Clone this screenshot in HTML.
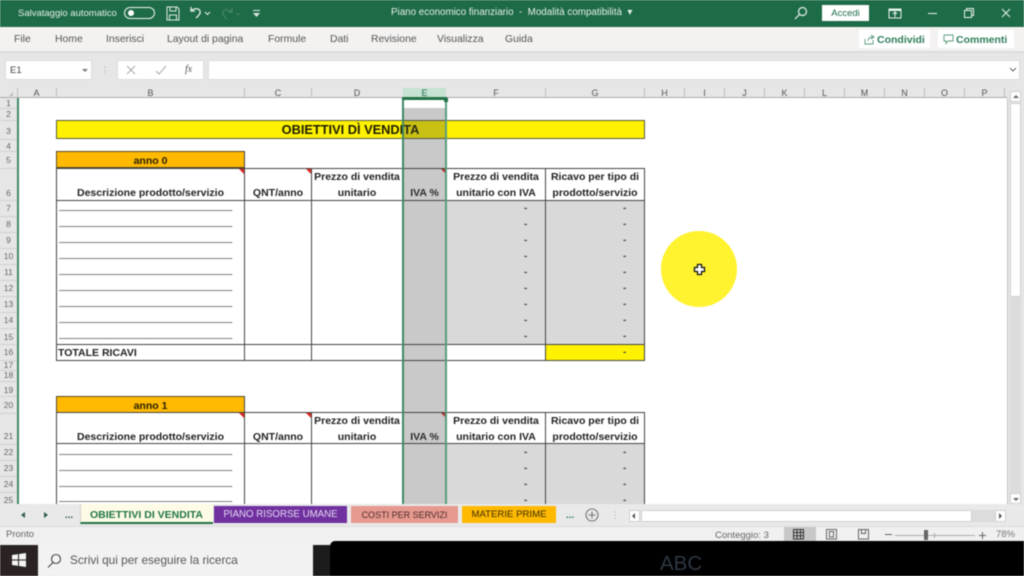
<!DOCTYPE html>
<html lang="it"><head><meta charset="utf-8"><title>Piano economico finanziario</title>
<style>
html,body{margin:0;padding:0;width:1024px;height:576px;overflow:hidden;background:#e6e6e6}
*{box-sizing:border-box}
#w{position:relative;width:1024px;height:576px;overflow:hidden;font-family:"Liberation Sans",sans-serif;filter:blur(.5px);color:#444}
#w div,#w span.a,#w svg{position:absolute}
.t{white-space:nowrap;line-height:14px}
.c{white-space:nowrap;text-align:center;line-height:14px}
.tb{color:#e4efe9;font-size:9.5px}
.rb{top:33px;font-size:10.4px;color:#555}
.ch{top:87px;font-size:9px;color:#555;text-align:center;line-height:12px}
.vs{top:88px;width:1px;height:10px;background:#bdbdbd}
.rh{left:0;width:17px;font-size:8.5px;color:#666;text-align:center;line-height:10px}
.rs{left:0;width:17px;height:1px;background:#cfcfcf}
.h{font-weight:bold;font-size:10.5px;color:#222;text-align:center;line-height:16px;white-space:nowrap;margin-top:1px}
.v{width:1px;background:#444}
.hl{height:1px;background:#444}
.dots{left:59px;width:173px;overflow:hidden;font-size:6px;line-height:8px;font-weight:bold;color:#000;white-space:nowrap}
.m{font-size:10px;color:#444;line-height:12px;margin-top:1px;font-weight:bold}
.tri{width:0;height:0;border-top:5px solid #e0261e;border-left:5px solid transparent}
</style></head><body><div id="w">

<!-- title bar -->
<div style="left:0;top:0;width:1024px;height:27px;background:#1e6b47"></div>
<div class="t tb" style="left:18px;top:7px">Salvataggio automatico</div>
<div style="left:124px;top:7px;width:31px;height:12px;border:1px solid #f0f5f2;border-radius:6px"></div>
<div style="left:128px;top:10px;width:6px;height:6px;border-radius:50%;background:#fff"></div>
<svg style="left:166px;top:6px" width="14" height="15" viewBox="0 0 14 15" fill="none" stroke="#dfeae4" stroke-width="1"><path d="M1 1h10l2 2v11H1z"/><path d="M4 1v4h6V1M3.500 14V9h7v5"/></svg>
<svg style="left:189px;top:6px" width="22" height="14" viewBox="0 0 22 14" fill="none" stroke="#e6f0ea" stroke-width="1.300"><path d="M2 1v4h4M2 5c3-3 8-3 9 0 .8 3-2 5-4 7"/><path d="M16 6l2.500 2.500L21 6" stroke-width="1"/></svg>
<svg style="left:220px;top:7px" width="22" height="13" viewBox="0 0 22 13" fill="none" stroke="#4d8a6d" stroke-width="1.100"><path d="M12 1v4H8M12 5C9 2 4 2 3 5c-.8 3 2 5 4 7"/><path d="M16 6l2 2 2-2" stroke-width=".8"/></svg>
<svg style="left:252px;top:9px" width="9" height="9" viewBox="0 0 9 9" fill="#dfeae4"><rect x="1" y="1" width="7" height="1"/><path d="M1 4h7L4.500 8z"/></svg>
<div class="t tb" style="left:391px;top:6px;font-size:9.8px">Piano economico finanziario &nbsp;-&nbsp; Modalità compatibilità &nbsp;▾</div>
<svg style="left:794px;top:6px" width="14" height="14" viewBox="0 0 14 14" fill="none" stroke="#e8f1ec" stroke-width="1.200"><circle cx="8.500" cy="5.500" r="4"/><path d="M5.500 8.500L1 13"/></svg>
<div class="c" style="left:822px;top:5px;width:47px;height:16px;background:#fff;color:#1e6b47;font-size:9.500px;line-height:17px">Accedi</div>
<svg style="left:888px;top:8px" width="14" height="11" viewBox="0 0 14 11" fill="none" stroke="#e8f1ec"><rect x="1" y="1" width="12" height="9"/><path d="M1 2h12" stroke-width="2"/><path d="M7 9V4.500M5 6l2-2 2 2"/></svg>
<div style="left:928px;top:13px;width:9px;height:1px;background:#e8f1ec"></div>
<svg style="left:964px;top:8px" width="10" height="10" viewBox="0 0 10 10" fill="none" stroke="#e8f1ec"><rect x=".5" y="2.500" width="7" height="7"/><path d="M2.500 2.500v-2h7v7h-2"/></svg>
<svg style="left:1001px;top:8px" width="10" height="10" viewBox="0 0 10 10" fill="none" stroke="#e8f1ec"><path d="M1 1l8 8M9 1l-8 8"/></svg>

<!-- ribbon tabs -->
<div style="left:0;top:27px;width:1024px;height:24px;background:#f3f2f1"></div>
<div style="left:0;top:51px;width:1024px;height:2px;background:#dcdcdc"></div>
<div class="t rb" style="left:14px">File</div>
<div class="t rb" style="left:55px">Home</div>
<div class="t rb" style="left:106px">Inserisci</div>
<div class="t rb" style="left:167px">Layout di pagina</div>
<div class="t rb" style="left:268px">Formule</div>
<div class="t rb" style="left:330px">Dati</div>
<div class="t rb" style="left:371px">Revisione</div>
<div class="t rb" style="left:437px">Visualizza</div>
<div class="t rb" style="left:505px">Guida</div>
<div style="left:859px;top:30px;width:71px;height:18px;background:#fff"></div>
<svg style="left:864px;top:34px" width="11" height="11" viewBox="0 0 11 11" fill="none" stroke="#5a9a7c" stroke-width=".9"><path d="M1 5v5h8V6M4 7c0-3 2-4 5-4M7 1l3 2-3 2"/></svg>
<div class="t" style="left:877px;top:33px;font-size:10.500px;font-weight:bold;color:#2f7d5a">Condividi</div>
<div style="left:938px;top:30px;width:76px;height:18px;background:#fff"></div>
<svg style="left:943px;top:34px" width="11" height="11" viewBox="0 0 11 11" fill="none" stroke="#5a9a7c" stroke-width=".9"><path d="M1 1h9v6H5L3 9.500V7H1z"/></svg>
<div class="t" style="left:956px;top:33px;font-size:10.500px;font-weight:bold;color:#2f7d5a">Commenti</div>

<!-- formula bar -->
<div style="left:5px;top:60px;width:87px;height:20px;background:#fff;border:1px solid #dcdcdc"></div>
<div class="t" style="left:10px;top:64px;font-size:9.500px;color:#444">E1</div>
<div style="left:82px;top:69px;border-top:3px solid #777;border-left:3px solid transparent;border-right:3px solid transparent"></div>
<div class="c" style="left:100px;top:63px;width:10px;color:#aaa;font-size:9px">⋮</div>
<div style="left:117px;top:60px;width:87px;height:20px;background:#fff;border:1px solid #dcdcdc"></div>
<svg style="left:126px;top:65px" width="10" height="10" viewBox="0 0 10 10" fill="none" stroke="#aaa"><path d="M1 1l8 8M9 1l-8 8"/></svg>
<svg style="left:155px;top:65px" width="12" height="10" viewBox="0 0 12 10" fill="none" stroke="#aaa"><path d="M1 6l3 3 7-8"/></svg>
<div class="t" style="left:185px;top:63px;font-family:'Liberation Serif',serif;font-style:italic;font-size:10px;color:#555"><i>fx</i></div>
<div style="left:208px;top:60px;width:812px;height:20px;background:#fff;border:1px solid #dcdcdc"></div>
<svg style="left:1009px;top:67px" width="8" height="6" viewBox="0 0 8 6" fill="none" stroke="#666"><path d="M1 1l3 3 3-3"/></svg>

<!-- column headers -->
<div style="left:403px;top:88px;width:43px;height:10px;background:#c6e2d2"></div>
<div style="left:0;top:97px;width:1007px;height:1px;background:#ababab"></div>
<div style="left:402px;top:97px;width:45px;height:2px;background:#217346"></div>
<div style="left:9px;top:92px;border-bottom:4px solid #bbb;border-left:4px solid transparent"></div>
<div class="ch" style="left:17px;width:39px">A</div><div class="ch" style="left:57px;width:187px">B</div><div class="ch" style="left:245px;width:66px">C</div><div class="ch" style="left:312px;width:90px">D</div><div class="ch" style="left:403px;width:43px;color:#1e6b47">E</div><div class="ch" style="left:447px;width:98px">F</div><div class="ch" style="left:546px;width:98px">G</div><div class="ch" style="left:645px;width:39px">H</div><div class="ch" style="left:685px;width:39px">I</div><div class="ch" style="left:725px;width:39px">J</div><div class="ch" style="left:765px;width:39px">K</div><div class="ch" style="left:805px;width:39px">L</div><div class="ch" style="left:845px;width:39px">M</div><div class="ch" style="left:885px;width:39px">N</div><div class="ch" style="left:925px;width:39px">O</div><div class="ch" style="left:965px;width:39px">P</div>
<div class="vs" style="left:17px"></div><div class="vs" style="left:56px"></div><div class="vs" style="left:244px"></div><div class="vs" style="left:311px"></div><div class="vs" style="left:545px"></div><div class="vs" style="left:644px"></div><div class="vs" style="left:684px"></div><div class="vs" style="left:724px"></div><div class="vs" style="left:764px"></div><div class="vs" style="left:804px"></div><div class="vs" style="left:844px"></div><div class="vs" style="left:884px"></div><div class="vs" style="left:924px"></div><div class="vs" style="left:964px"></div><div class="vs" style="left:1004px"></div>

<!-- row headers -->
<div style="left:0;top:98px;width:17px;height:406px;background:#e6e6e6"></div>
<div class="rh" style="top:98px">1</div><div class="rh" style="top:109px">2</div><div class="rh" style="top:126px">3</div><div class="rh" style="top:141px">4</div><div class="rh" style="top:155px">5</div><div class="rh" style="top:188px">6</div><div class="rh" style="top:203px">7</div><div class="rh" style="top:219px">8</div><div class="rh" style="top:235px">9</div><div class="rh" style="top:251px">10</div><div class="rh" style="top:267px">11</div><div class="rh" style="top:283px">12</div><div class="rh" style="top:299px">13</div><div class="rh" style="top:315px">14</div><div class="rh" style="top:332px">15</div><div class="rh" style="top:347px">16</div><div class="rh" style="top:360px">17</div><div class="rh" style="top:370px">18</div><div class="rh" style="top:385px">19</div><div class="rh" style="top:400px">20</div><div class="rh" style="top:431px">21</div><div class="rh" style="top:447px">22</div><div class="rh" style="top:463px">23</div><div class="rh" style="top:479px">24</div><div class="rh" style="top:495px">25</div>
<div class="rs" style="top:108px"></div><div class="rs" style="top:120px"></div><div class="rs" style="top:139px"></div><div class="rs" style="top:151px"></div><div class="rs" style="top:168px"></div><div class="rs" style="top:200px"></div><div class="rs" style="top:216px"></div><div class="rs" style="top:232px"></div><div class="rs" style="top:248px"></div><div class="rs" style="top:264px"></div><div class="rs" style="top:280px"></div><div class="rs" style="top:296px"></div><div class="rs" style="top:312px"></div><div class="rs" style="top:328px"></div><div class="rs" style="top:344px"></div><div class="rs" style="top:360px"></div><div class="rs" style="top:370px"></div><div class="rs" style="top:381px"></div><div class="rs" style="top:396px"></div><div class="rs" style="top:413px"></div><div class="rs" style="top:444px"></div><div class="rs" style="top:460px"></div><div class="rs" style="top:476px"></div><div class="rs" style="top:492px"></div>

<!-- sheet -->
<div style="left:17px;top:98px;width:990px;height:406px;background:#fff;overflow:hidden"></div>
<div style="left:17px;top:98px;width:1.500px;height:406px;background:#3f8a68"></div>
<div style="left:1007px;top:98px;width:1px;height:406px;background:#c4c4c4"></div>

<!-- title band -->
<div style="left:56px;top:120px;width:589px;height:19px;background:#fff200;border:1px solid #5a5a3a"></div>
<div class="c" style="left:56px;top:123px;width:589px;font-size:12.800px;font-weight:bold;color:#1c1c00">OBIETTIVI DÌ VENDITA</div>

<!-- table 1 -->
<div style="left:56px;top:151px;width:189px;height:17px;background:#ffb900;border:1px solid #5a4a20"></div>
<div class="c" style="left:56px;top:154px;width:189px;font-size:10.500px;font-weight:bold;color:#2a2000">anno 0</div>
<div style="left:447px;top:200px;width:198px;height:144px;background:#d9d9d9"></div>
<div style="left:546px;top:344px;width:99px;height:16px;background:#fff200"></div>
<div class="hl" style="left:56px;top:168px;width:589px"></div>
<div class="hl" style="left:56px;top:200px;width:589px"></div>
<div class="hl" style="left:56px;top:344px;width:589px"></div>
<div class="hl" style="left:56px;top:360px;width:589px"></div>
<div class="v" style="left:56px;top:168px;height:192px"></div>
<div class="v" style="left:244px;top:151px;height:209px"></div>
<div class="v" style="left:311px;top:168px;height:192px"></div>
<div class="v" style="left:402px;top:168px;height:192px"></div>
<div class="v" style="left:446px;top:168px;height:192px"></div>
<div class="v" style="left:545px;top:168px;height:192px"></div>
<div class="v" style="left:644px;top:168px;height:192px"></div>
<div class="tri" style="left:239px;top:169px"></div><div class="tri" style="left:306px;top:169px"></div><div class="tri" style="left:441px;top:169px"></div>
<div class="h" style="left:57px;top:184px;width:187px">Descrizione prodotto/servizio</div>
<div class="h" style="left:245px;top:184px;width:66px">QNT/anno</div>
<div class="h" style="left:312px;top:168px;width:90px">Prezzo di vendita</div>
<div class="h" style="left:312px;top:184px;width:90px">unitario</div>
<div class="h" style="left:403px;top:184px;width:43px">IVA %</div>
<div class="h" style="left:447px;top:168px;width:98px">Prezzo di vendita</div>
<div class="h" style="left:447px;top:184px;width:98px">unitario con IVA</div>
<div class="h" style="left:546px;top:168px;width:98px">Ricavo per tipo di</div>
<div class="h" style="left:546px;top:184px;width:98px">prodotto/servizio</div>
<div class="dots" style="top:206px">........................................................................................................................</div>
<div class="dots" style="top:222px">........................................................................................................................</div>
<div class="dots" style="top:238px">........................................................................................................................</div>
<div class="dots" style="top:254px">........................................................................................................................</div>
<div class="dots" style="top:270px">........................................................................................................................</div>
<div class="dots" style="top:286px">........................................................................................................................</div>
<div class="dots" style="top:302px">........................................................................................................................</div>
<div class="dots" style="top:318px">........................................................................................................................</div>
<div class="dots" style="top:334px">........................................................................................................................</div>
<div class="h" style="left:58px;top:344px;font-size:10.500px">TOTALE RICAVI</div>
<div class="m" style="left:524px;top:202px">-</div><div class="m" style="left:623px;top:202px">-</div>
<div class="m" style="left:524px;top:218px">-</div><div class="m" style="left:623px;top:218px">-</div>
<div class="m" style="left:524px;top:234px">-</div><div class="m" style="left:623px;top:234px">-</div>
<div class="m" style="left:524px;top:250px">-</div><div class="m" style="left:623px;top:250px">-</div>
<div class="m" style="left:524px;top:266px">-</div><div class="m" style="left:623px;top:266px">-</div>
<div class="m" style="left:524px;top:282px">-</div><div class="m" style="left:623px;top:282px">-</div>
<div class="m" style="left:524px;top:298px">-</div><div class="m" style="left:623px;top:298px">-</div>
<div class="m" style="left:524px;top:314px">-</div><div class="m" style="left:623px;top:314px">-</div>
<div class="m" style="left:524px;top:330px">-</div><div class="m" style="left:623px;top:330px">-</div>
<div class="m" style="left:623px;top:346px">-</div>

<!-- table 2 -->
<div style="left:56px;top:396px;width:189px;height:17px;background:#ffb900;border:1px solid #5a4a20"></div>
<div class="c" style="left:56px;top:399px;width:189px;font-size:10.500px;font-weight:bold;color:#2a2000">anno 1</div>
<div style="left:447px;top:444px;width:198px;height:60px;background:#d9d9d9"></div>
<div class="hl" style="left:56px;top:412px;width:589px"></div>
<div class="hl" style="left:56px;top:443px;width:589px"></div>
<div class="v" style="left:56px;top:412px;height:92px"></div>
<div class="v" style="left:244px;top:396px;height:108px"></div>
<div class="v" style="left:311px;top:412px;height:92px"></div>
<div class="v" style="left:402px;top:412px;height:92px"></div>
<div class="v" style="left:446px;top:412px;height:92px"></div>
<div class="v" style="left:545px;top:412px;height:92px"></div>
<div class="v" style="left:644px;top:412px;height:92px"></div>
<div class="tri" style="left:239px;top:413px"></div><div class="tri" style="left:306px;top:413px"></div><div class="tri" style="left:441px;top:413px"></div>
<div class="h" style="left:57px;top:428px;width:187px">Descrizione prodotto/servizio</div>
<div class="h" style="left:245px;top:428px;width:66px">QNT/anno</div>
<div class="h" style="left:312px;top:412px;width:90px">Prezzo di vendita</div>
<div class="h" style="left:312px;top:428px;width:90px">unitario</div>
<div class="h" style="left:403px;top:428px;width:43px">IVA %</div>
<div class="h" style="left:447px;top:412px;width:98px">Prezzo di vendita</div>
<div class="h" style="left:447px;top:428px;width:98px">unitario con IVA</div>
<div class="h" style="left:546px;top:412px;width:98px">Ricavo per tipo di</div>
<div class="h" style="left:546px;top:428px;width:98px">prodotto/servizio</div>
<div class="dots" style="top:450px">........................................................................................................................</div>
<div class="dots" style="top:466px">........................................................................................................................</div>
<div class="dots" style="top:482px">........................................................................................................................</div>
<div class="dots" style="top:497px">........................................................................................................................</div>
<div class="m" style="left:524px;top:446px">-</div><div class="m" style="left:623px;top:446px">-</div>
<div class="m" style="left:524px;top:462px">-</div><div class="m" style="left:623px;top:462px">-</div>
<div class="m" style="left:524px;top:478px">-</div><div class="m" style="left:623px;top:478px">-</div>
<div class="m" style="left:524px;top:494px">-</div><div class="m" style="left:623px;top:494px">-</div>

<!-- column selection overlay -->
<div style="left:403px;top:108px;width:43px;height:396px;background:rgba(70,70,70,.29)"></div>
<div style="left:402px;top:98px;width:2px;height:406px;background:#3f8a68"></div>
<div style="left:445px;top:98px;width:2px;height:406px;background:#5a9c80"></div>
<div style="left:402px;top:98px;width:45px;height:2px;background:#217346"></div>
<div style="left:444px;top:98px;width:4px;height:4px;background:#217346"></div>

<!-- highlight and cursor -->
<div style="left:661px;top:231px;width:76px;height:76px;border-radius:50%;background:#fff22e"></div>
<svg style="left:693px;top:263px" width="13" height="13" viewBox="0 0 13 13"><path d="M4.500 1.500h4v3h3v4h-3v3h-4v-3h-3v-4h3z" fill="#fff" stroke="#111" stroke-width="1.300"/></svg>

<!-- scrollbar -->
<div style="left:1008px;top:85px;width:16px;height:420px;background:#e6e6e6"></div>
<div style="left:1010px;top:91px;width:11px;height:11px;background:#fff;border:1px solid #cfcfcf"></div>
<div style="left:1013px;top:95px;border-bottom:3px solid #666;border-left:3px solid transparent;border-right:3px solid transparent"></div>
<div style="left:1010px;top:103px;width:11px;height:194px;background:#fff;border:1px solid #d0d0d0"></div>
<div style="left:1010px;top:297px;width:11px;height:196px;background:#dcdcdc"></div>
<div style="left:1010px;top:493px;width:11px;height:11px;background:#fff;border:1px solid #cfcfcf"></div>
<div style="left:1013px;top:498px;border-top:3px solid #666;border-left:3px solid transparent;border-right:3px solid transparent"></div>

<!-- sheet tabs -->
<div style="left:0;top:504px;width:1024px;height:22px;background:#e9e9e9"></div>
<div style="left:21px;top:512px;border-right:4px solid #2f5d48;border-top:3px solid transparent;border-bottom:3px solid transparent"></div>
<div style="left:44px;top:512px;border-left:4px solid #2f5d48;border-top:3px solid transparent;border-bottom:3px solid transparent"></div>
<div class="c" style="left:62px;top:509px;width:14px;font-size:10px;font-weight:bold;color:#2f5d48">...</div>
<div style="left:80px;top:504px;width:133px;height:20px;background:#fdfbe6;border-bottom:2px solid #217346;border-left:1px solid #cfcfcf"></div>
<div class="c" style="left:80px;top:508px;width:133px;font-size:10.500px;font-weight:bold;color:#217346">OBIETTIVI DI VENDITA</div>
<div style="left:214px;top:506px;width:133px;height:17px;background:#7030a0"></div>
<div class="c" style="left:214px;top:508px;width:133px;font-size:9.700px;color:#e6d9f0">PIANO RISORSE UMANE</div>
<div style="left:351px;top:506px;width:107px;height:17px;background:#e6998f"></div>
<div class="c" style="left:351px;top:508px;width:107px;font-size:9px;color:#4a2f2b">COSTI PER SERVIZI</div>
<div style="left:462px;top:506px;width:94px;height:17px;background:#ffb900"></div>
<div class="c" style="left:462px;top:508px;width:94px;font-size:9.600px;color:#3a2c00">MATERIE PRIME</div>
<div class="c" style="left:563px;top:509px;width:14px;font-size:10px;font-weight:bold;color:#2f7d5a">...</div>
<svg style="left:585px;top:508px" width="14" height="14" viewBox="0 0 14 14" fill="none" stroke="#777" stroke-width="1.100"><circle cx="7" cy="7" r="6"/><path d="M7 3.500v7M3.500 7h7"/></svg>
<div class="c" style="left:610px;top:508px;width:10px;color:#aaa;font-size:9px">⋮</div>
<div style="left:629px;top:510px;width:11px;height:12px;background:#fff;border:1px solid #cfcfcf"></div>
<div style="left:632px;top:513px;border-right:3px solid #555;border-top:3px solid transparent;border-bottom:3px solid transparent"></div>
<div style="left:641px;top:510px;width:331px;height:12px;background:#fff;border:1px solid #d0d0d0"></div>
<div style="left:972px;top:510px;width:24px;height:12px;background:#dcdcdc"></div>
<div style="left:995px;top:510px;width:11px;height:12px;background:#fff;border:1px solid #cfcfcf"></div>
<div style="left:999px;top:513px;border-left:3px solid #555;border-top:3px solid transparent;border-bottom:3px solid transparent"></div>

<!-- status bar -->
<div style="left:0;top:526px;width:1024px;height:19px;background:#f0f0f0;border-top:1px solid #dcdcdc"></div>
<div class="t" style="left:6px;top:528px;font-size:9.500px;color:#666">Pronto</div>
<div class="t" style="left:715px;top:529px;font-size:9.500px;color:#666">Conteggio: 3</div>
<div style="left:784px;top:527px;width:32px;height:15px;background:#c8c8c8"></div>
<svg style="left:793px;top:529px" width="12" height="11" viewBox="0 0 12 11" fill="none" stroke="#333"><rect x=".5" y=".5" width="10" height="9.500"/><path d="M4 .5v9.500M7.500 .5v9.500M.5 3.500h10M.5 6.800h10"/></svg>
<svg style="left:826px;top:529px" width="12" height="11" viewBox="0 0 12 11" fill="none" stroke="#666"><rect x=".5" y=".5" width="10" height="9.500"/><rect x="3.500" y="2.500" width="4" height="5.500"/></svg>
<svg style="left:858px;top:529px" width="12" height="11" viewBox="0 0 12 11" fill="none" stroke="#666"><rect x=".5" y=".5" width="10" height="9.500"/><path d="M3.500 .5v4h4v-4"/></svg>
<div style="left:885px;top:534px;width:7px;height:1px;background:#666"></div>
<div style="left:895px;top:535px;width:80px;height:1px;background:#aaa"></div>
<div style="left:924px;top:530px;width:4px;height:10px;background:#666"></div>
<div style="left:934px;top:533px;width:1px;height:5px;background:#aaa"></div>
<div style="left:979px;top:535px;width:7px;height:1px;background:#666"></div>
<div style="left:982px;top:532px;width:1px;height:7px;background:#666"></div>
<div class="t" style="left:996px;top:528px;font-size:9.500px;color:#777">78%</div>

<!-- taskbar -->
<div style="left:0;top:545px;width:330px;height:31px;background:#f2f2f2"></div>
<div style="left:0;top:545px;width:38px;height:31px;background:#2a2321"></div>
<svg style="left:12px;top:553px" width="14" height="14" viewBox="0 0 14 14" fill="#f4f4f4"><path d="M0 2l6-.9V6.500H0zM7 1l7-1v6.500H7zM0 7.500h6v5.400L0 12zM7 7.500h7V14l-7-1z"/></svg>
<svg style="left:47px;top:553px" width="15" height="15" viewBox="0 0 15 15" fill="none" stroke="#444" stroke-width="1.100"><circle cx="9" cy="6" r="4.500"/><path d="M6 9.500L1 14.500"/></svg>
<div class="t" style="left:70px;top:553px;font-size:11.800px;color:#555">Scrivi qui per eseguire la ricerca</div>
<div style="left:313px;top:545px;width:17px;height:31px;background:#1c1c1c"></div>
<div style="left:330px;top:541px;width:694px;height:35px;background:#000;border-top-left-radius:5px"></div>
<div class="t" style="left:660px;top:555px;font-size:20.500px;line-height:18px;color:#2e3744">ABC</div>
</div></body></html>
